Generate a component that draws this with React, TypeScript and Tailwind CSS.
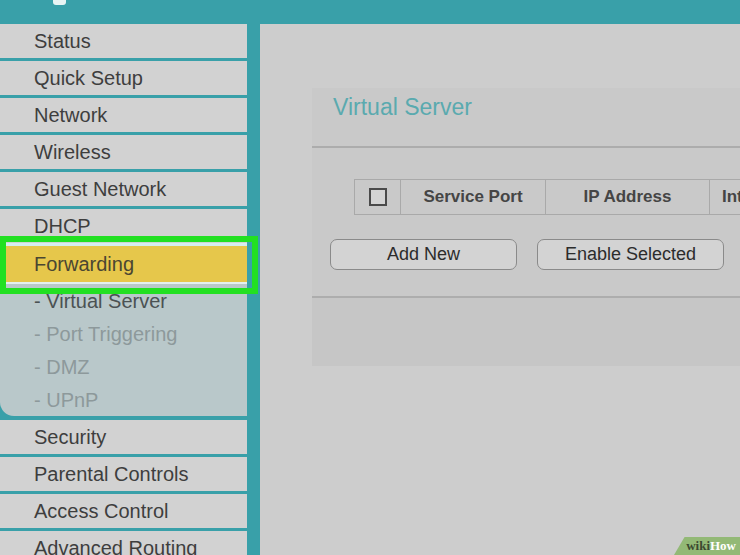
const MENU_TOP = ['Status', 'Quick Setup', 'Network', 'Wireless', 'Guest Network', 'DHCP'];
const MENU_BOTTOM = ['Security', 'Parental Controls', 'Access Control', 'Advanced Routing'];
const SUBMENU = [
  { label: '- Virtual Server', active: true },
  { label: '- Port Triggering', active: false },
  { label: '- DMZ', active: false },
  { label: '- UPnP', active: false },
];

function MenuRow({ label }: { label: string }) {
  return (
    <div className="flex h-[34px] shrink-0 items-center bg-[#d2d2d2] pl-[34px] text-[20px] text-[#3e3e3e]">
      {label}
    </div>
  );
}

function Sidebar() {
  return (
    <div className="relative flex w-[260px] shrink-0 overflow-hidden bg-[#39a0a9]">
      <div className="flex w-[247px] shrink-0 flex-col">
        {MENU_TOP.map((m, i) => (
          <div key={m} className="flex shrink-0 flex-col">
            {i > 0 && <div className="h-[3px] shrink-0 bg-[#39a0a9]" />}
            <MenuRow label={m} />
          </div>
        ))}
        <div className="h-[3px] shrink-0 bg-[#d6eef0]" />
        <div className="flex h-[36px] shrink-0 items-center bg-[#e6c74b] pl-[34px] text-[20px] text-[#4a4632]">
          Forwarding
        </div>
        <div className="h-[2px] shrink-0 bg-[#e2f1f1]" />
        <div className="flex shrink-0 flex-col rounded-bl-[14px] bg-[#b9c8ca]">
          {SUBMENU.map((s) => (
            <div
              key={s.label}
              className={`flex h-[33px] shrink-0 items-center pl-[34px] text-[20px] ${s.active ? 'text-[#4b5253]' : 'text-[#8d999b]'}`}
            >
              {s.label}
            </div>
          ))}
        </div>
        <div className="h-[4px] shrink-0 bg-[#39a0a9]" />
        {MENU_BOTTOM.map((m, i) => (
          <div key={m} className="flex shrink-0 flex-col">
            {i > 0 && <div className="h-[3px] shrink-0 bg-[#39a0a9]" />}
            <MenuRow label={m} />
          </div>
        ))}
      </div>
      {/* highlight around Forwarding */}
      <div className="absolute left-0 top-[212px] h-[58px] w-[258px] border-[6px] border-[#22e022]" />
    </div>
  );
}

function VirtualServerPanel() {
  return (
    <div className="flex w-[440px] flex-col bg-[#c9c9c9]">
      <div className="h-[58px] pl-[21px] pt-[2px] text-[23px] text-[#5aaaaf]">Virtual Server</div>
      <div className="h-[2px] bg-[#acacac]" />
      <div className="flex h-[148px] flex-col">
        <div className="ml-[42px] mt-[31px] flex h-[36px] border border-[#a9a9a9] text-[17px] font-bold text-[#454545]">
          <div className="flex w-[46px] items-center justify-center border-r border-[#a9a9a9]">
            <div className="size-[18px] border-2 border-[#4a4a4a] bg-[#d4d4d4]" />
          </div>
          <div className="flex w-[145px] items-center justify-center border-r border-[#a9a9a9]">Service Port</div>
          <div className="flex w-[164px] items-center justify-center border-r border-[#a9a9a9]">IP Address</div>
          <div className="flex flex-1 items-center overflow-hidden whitespace-nowrap pl-[12px]">Internal Port</div>
        </div>
        <div className="ml-[18px] mt-[24px] flex gap-[20px]">
          <button className="h-[31px] w-[187px] rounded-[7px] border border-[#8a8a8a] bg-[#d3d3d3] text-[18px] text-[#2c2c2c]">
            Add New
          </button>
          <button className="h-[31px] w-[187px] rounded-[7px] border border-[#8a8a8a] bg-[#d3d3d3] text-[18px] text-[#2c2c2c]">
            Enable Selected
          </button>
        </div>
      </div>
      <div className="h-[2px] bg-[#adadad]" />
      <div className="flex h-[68px] items-end justify-end bg-[#c6c6c6] pb-[6px]">
        <div className="h-[28px] w-[6px] rounded-l-[6px] border border-r-0 border-[#8a8a8a]" />
      </div>
    </div>
  );
}

export default function App() {
  return (
    <div className="relative flex h-[555px] w-[740px] flex-col overflow-hidden bg-[#39a0a9] font-['Liberation_Sans',Arial,sans-serif]">
      <div className="relative h-[24px] shrink-0">
        <div className="absolute left-[53px] top-0 h-[5px] w-[13px] rounded-b-[3px] bg-[#e8f4f4]" />
      </div>
      <div className="flex min-h-0 flex-1">
        <Sidebar />
        <div className="flex-1 bg-[#cdcdcd] pl-[52px] pt-[64px]">
          <VirtualServerPanel />
        </div>
      </div>
      <div className="absolute bottom-0 right-0 flex h-[18px] w-[66px] items-center justify-end pr-[4px] [clip-path:polygon(16%_0,100%_0,100%_100%,0_100%)] bg-[#93b976] font-['Liberation_Serif',serif] text-[13px] font-bold">
        <span className="text-[#3c4a30]">wiki</span>
        <span className="text-white">How</span>
      </div>
    </div>
  );
}
